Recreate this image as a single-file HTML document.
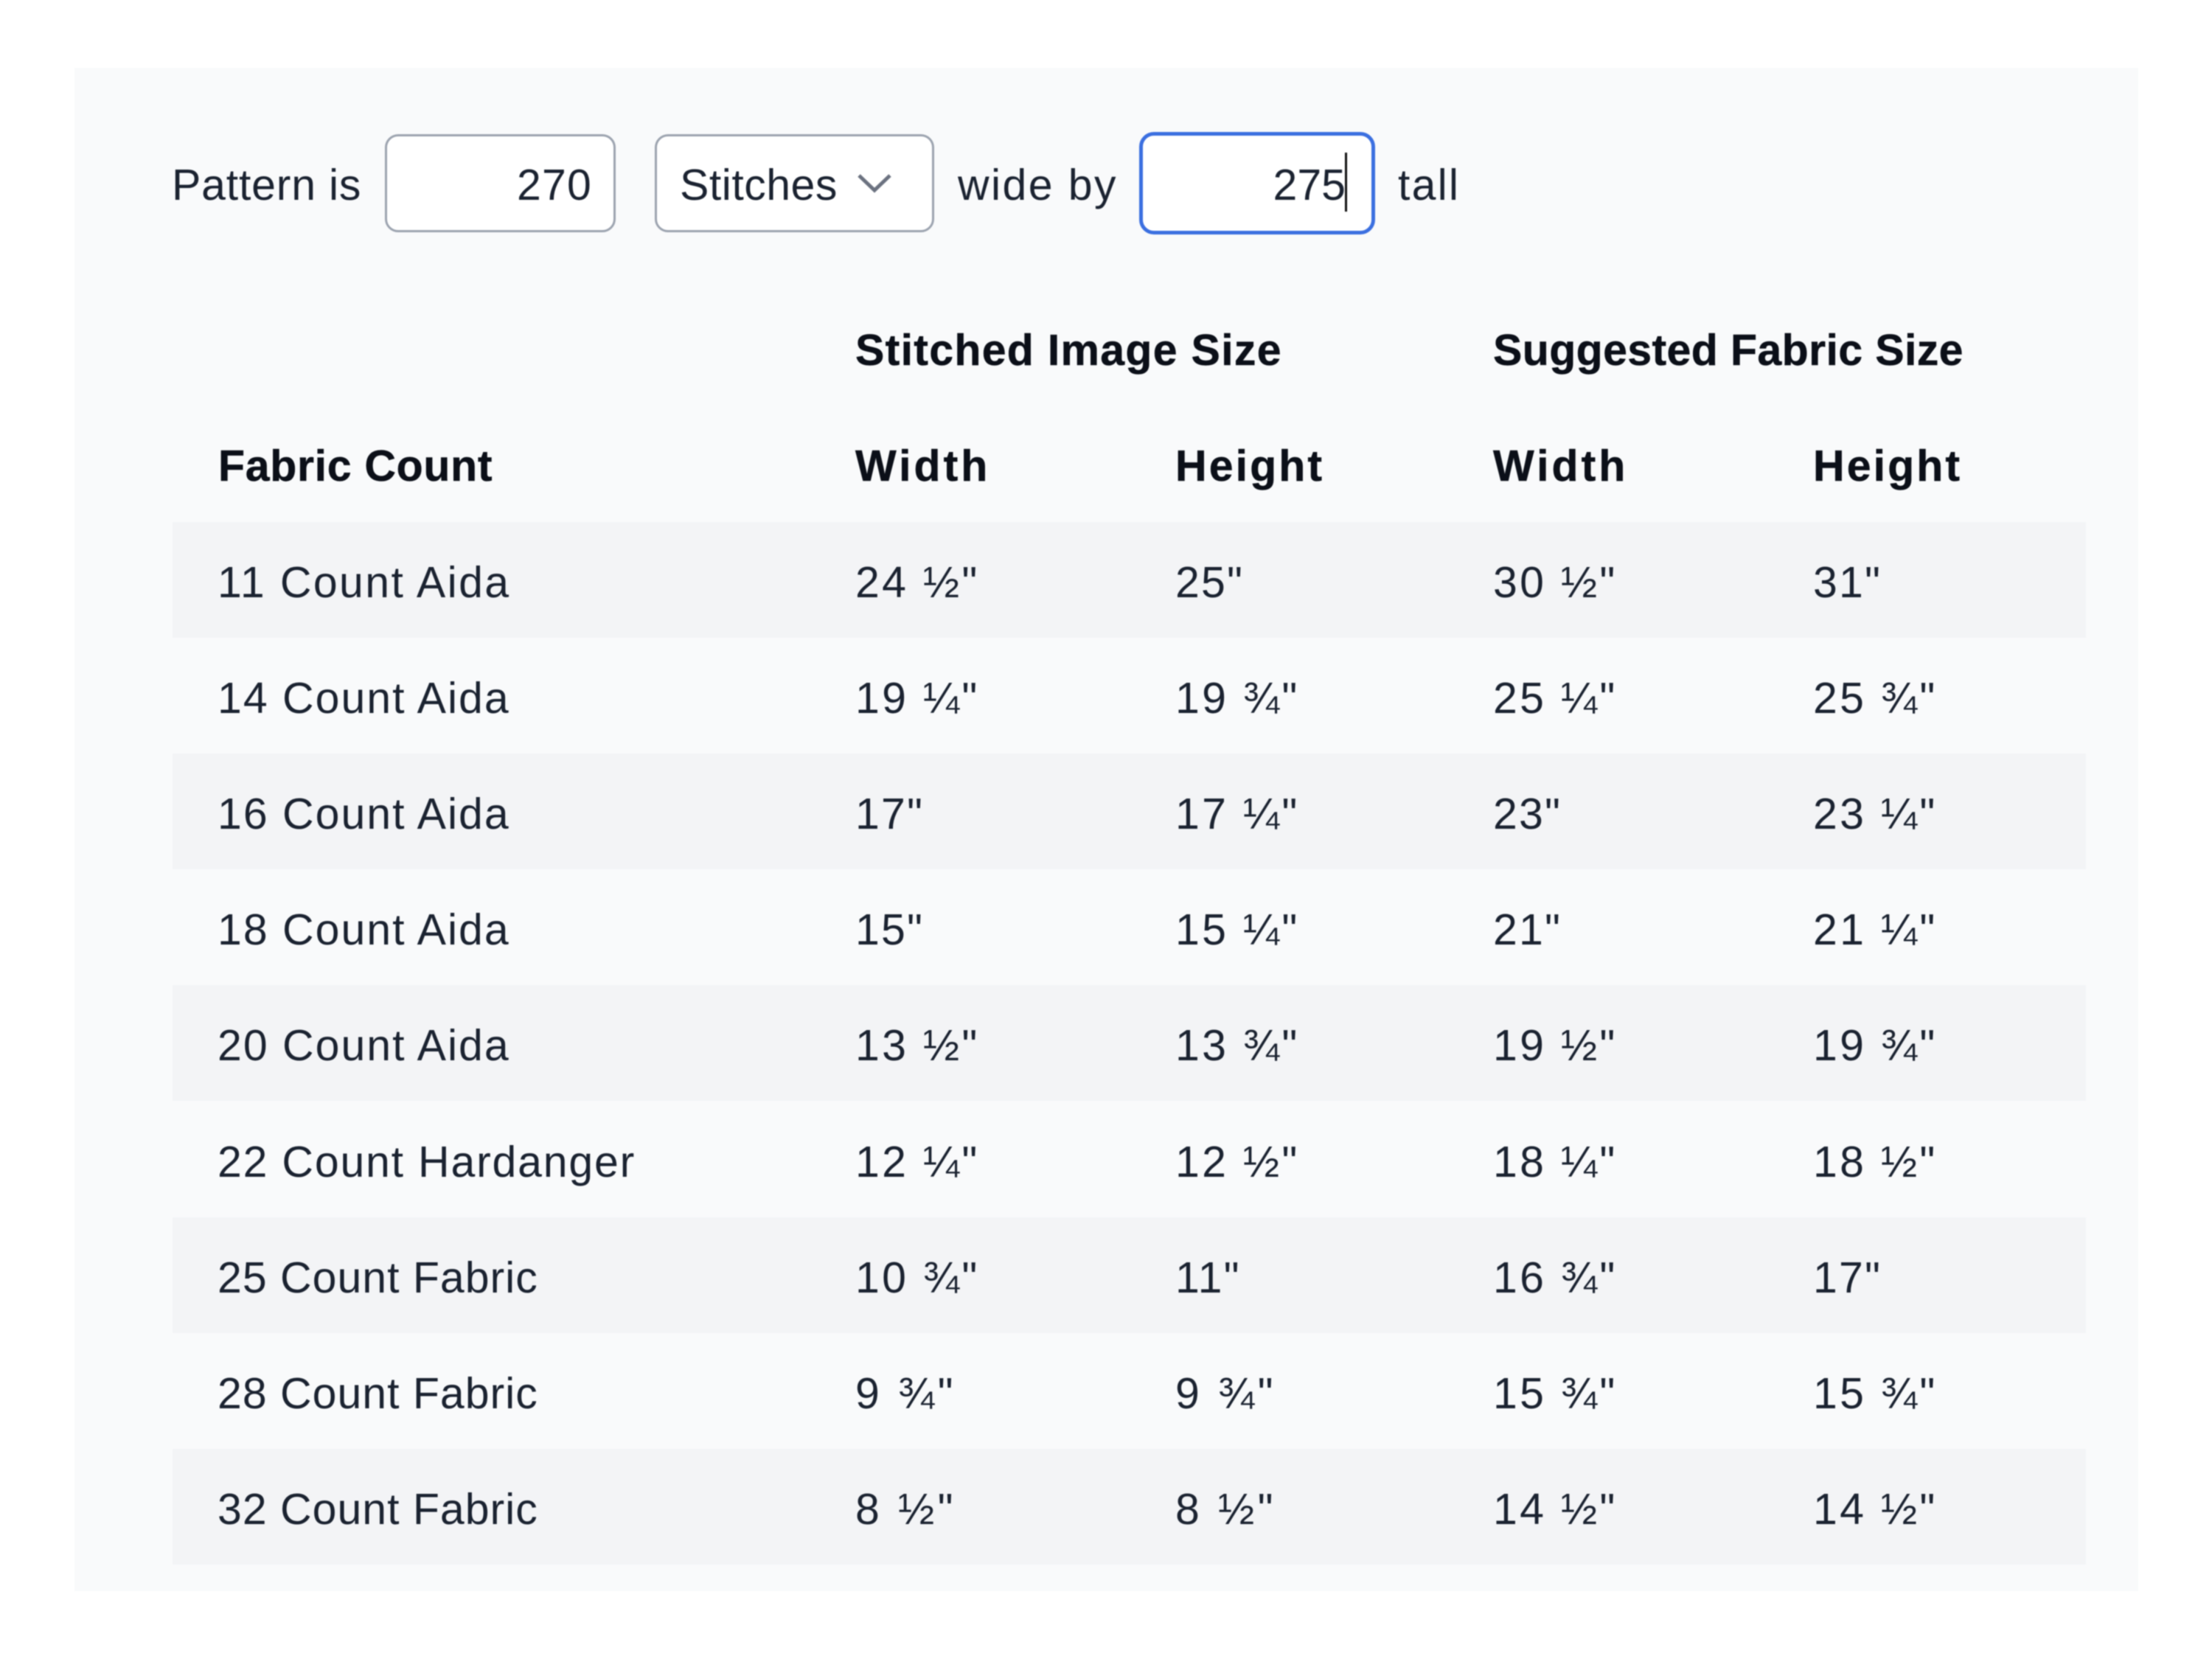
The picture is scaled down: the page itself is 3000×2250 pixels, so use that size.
<!DOCTYPE html>
<html><head><meta charset="utf-8"><style>
html,body{margin:0;padding:0;width:3000px;height:2250px;background:#fff;overflow:hidden}
body{font-family:"Liberation Sans",sans-serif;font-size:59px;color:#1a2230;position:relative;filter:blur(.7px)}
.panel{position:absolute;left:101px;top:92px;width:2799px;height:2066px;background:#f9fafb}
.a{position:absolute;white-space:nowrap}
.t{line-height:80px;letter-spacing:.7px}
.box{position:absolute;box-sizing:border-box;background:#fff;border:3px solid #9ca3af;border-radius:18px}
.row{position:absolute;left:234px;width:2595px;height:157px}
.row.s{background:#f3f4f6}
.row span,.hd span{position:absolute;top:42px;line-height:80px;white-space:nowrap;letter-spacing:3.3px}
.row span:nth-child(1){left:61px;letter-spacing:2px}
.row.fb span:nth-child(1){letter-spacing:1px}
.row.hg span:nth-child(1){letter-spacing:1.8px}
.row span:nth-child(2),.hd span.c1{left:926px}
.row span:nth-child(3),.hd span.c2{left:1360px}
.row span:nth-child(4),.hd span.c3{left:1791px}
.row span:nth-child(5),.hd span.c4{left:2225px}
.row span.p{letter-spacing:2.2px}
.row span.n{letter-spacing:4.4px}
.hd{position:absolute;left:234px;width:2595px;height:157px;font-weight:700;color:#0b0f18;-webkit-text-stroke:.5px #0b0f18}
.hd span{top:41px;letter-spacing:.7px}
.hd span.c0{left:62px}
.hd span.w{letter-spacing:4px}
.hd span.h{letter-spacing:3.1px}
</style></head><body>
<div class="panel"></div>
<div class="a t" style="left:233px;top:211px;letter-spacing:.8px">Pattern is</div>
<div class="box" style="left:522px;top:182px;width:313px;height:133px"></div>
<div class="a t" style="right:2197px;top:211px;letter-spacing:1.2px">270</div>
<div class="box" style="left:888px;top:182px;width:379px;height:133px"></div>
<div class="a t" style="left:922px;top:211px;letter-spacing:.5px">Stitches</div>
<svg class="a" style="left:1160px;top:232px" width="52" height="32" viewBox="0 0 52 32"><path d="M5 6 L26 26 L47 6" fill="none" stroke="#6b7280" stroke-width="5"/></svg>
<div class="a t" style="left:1299px;top:211px;letter-spacing:2.4px">wide by</div>
<div class="box" style="left:1545px;top:179px;width:320px;height:139px;border:5px solid #3b6fe0;border-radius:20px"></div>
<div class="a t" style="right:1175px;top:211px;letter-spacing:0">275</div>
<div class="a" style="left:1824px;top:207px;width:3px;height:80px;background:#111"></div>
<div class="a t" style="left:1896px;top:211px;letter-spacing:2.2px">tall</div>

<div class="hd" style="top:394px"><span class="c1" style="letter-spacing:1.3px">Stitched Image Size</span><span class="c3" style="letter-spacing:.4px">Suggested Fabric Size</span></div>
<div class="hd" style="top:551px"><span class="c0">Fabric Count</span><span class="c1 w">Width</span><span class="c2 h">Height</span><span class="c3 w">Width</span><span class="c4 h">Height</span></div>

<div class="row s" style="top:708px"><span style="letter-spacing:2.4px">11 Count Aida</span><span>24 ½"</span><span class="p">25"</span><span>30 ½"</span><span class="p">31"</span></div>
<div class="row" style="top:865px"><span>14 Count Aida</span><span>19 ¼"</span><span>19 ¾"</span><span>25 ¼"</span><span>25 ¾"</span></div>
<div class="row s" style="top:1022px"><span>16 Count Aida</span><span class="p">17"</span><span>17 ¼"</span><span class="p">23"</span><span>23 ¼"</span></div>
<div class="row" style="top:1179px"><span>18 Count Aida</span><span class="p">15"</span><span>15 ¼"</span><span class="p">21"</span><span>21 ¼"</span></div>
<div class="row s" style="top:1336px"><span>20 Count Aida</span><span>13 ½"</span><span>13 ¾"</span><span>19 ½"</span><span>19 ¾"</span></div>
<div class="row hg" style="top:1494px"><span>22 Count Hardanger</span><span>12 ¼"</span><span>12 ½"</span><span>18 ¼"</span><span>18 ½"</span></div>
<div class="row s fb" style="top:1651px"><span>25 Count Fabric</span><span>10 ¾"</span><span class="p">11"</span><span>16 ¾"</span><span class="p">17"</span></div>
<div class="row fb" style="top:1808px"><span>28 Count Fabric</span><span class="n">9 ¾"</span><span class="n">9 ¾"</span><span>15 ¾"</span><span>15 ¾"</span></div>
<div class="row s fb" style="top:1965px"><span>32 Count Fabric</span><span class="n">8 ½"</span><span class="n">8 ½"</span><span>14 ½"</span><span>14 ½"</span></div>
</body></html>
